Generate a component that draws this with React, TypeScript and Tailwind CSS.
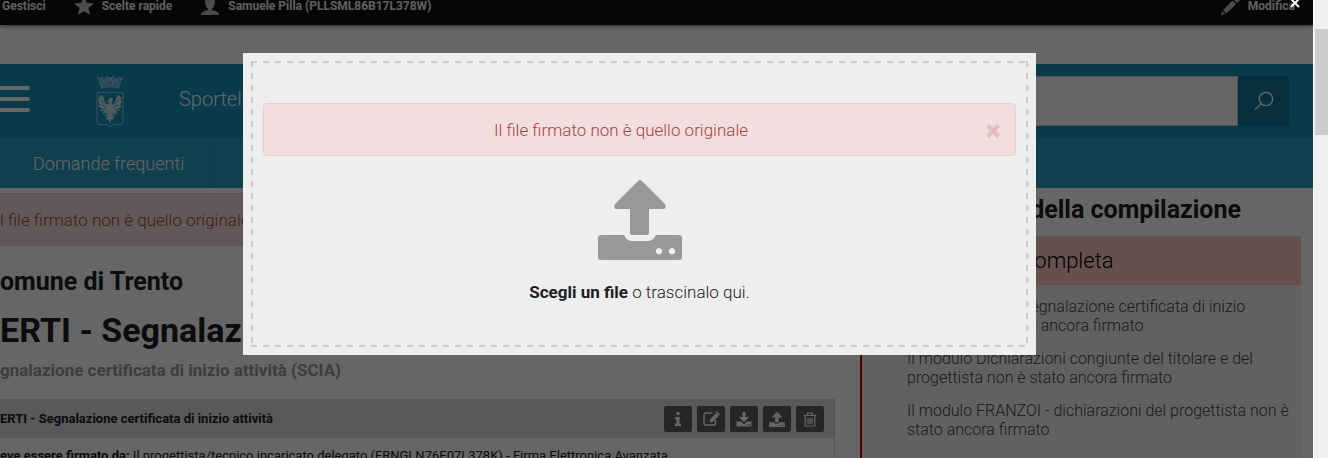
import type { ReactNode } from "react";

function UploadIcon({ className }: { className: string }) {
  return (
    <svg viewBox="0 0 84 80" className={className} fill="currentColor" aria-hidden="true">
      <path d="M40 1Q42 -1 44 1L67 24Q69 29 65 29H51V53Q51 55 49 55H34Q32 55 32 53V29H18Q15 29 17 24Z" />
      <path
        fillRule="evenodd"
        d="M3 55H26Q29 61 34 61H50Q55 61 58 55H81Q84 55 84 58V77Q84 80 81 80H3Q0 80 0 77V58Q0 55 3 55ZM61 68a3.2 3.2 0 1 0 .01 0ZM74 68a3.2 3.2 0 1 0 .01 0Z"
      />
    </svg>
  );
}

function DownloadIcon() {
  return (
    <svg viewBox="0 0 16 15" className="h-[15px] w-4" fill="currentColor" aria-hidden="true">
      <path d="M6.5 0h3v5H13L8 10.500 3 5h3.500Z" />
      <path fillRule="evenodd" d="M.5 9.500H5L8 12.300 11 9.500h4.500V14.500H.5ZM11 12v1h1v-1ZM13.200 12v1h1v-1Z" />
    </svg>
  );
}

function InfoIcon() {
  return (
    <svg viewBox="0 0 8 14" className="h-3.5 w-2" fill="currentColor" aria-hidden="true">
      <path d="M2.500 0h3v3h-3ZM1 5h4.600v6.500H7V14H1v-2.500h1.500V7.300H1Z" />
    </svg>
  );
}

function EditIcon() {
  return (
    <svg viewBox="0 0 18 16" className="h-4 w-[18px]" fill="none" stroke="currentColor" aria-hidden="true">
      <path d="M10.500 2H4Q2 2 2 4v8.500Q2 14 4 14h7.500q2 0 2-2V9" strokeWidth="1.400" />
      <path d="M8 11.200 8.700 8 14 2.300l2.600 2.400-5.400 5.700Z" fill="currentColor" strokeWidth=".5" />
      <path d="m14 .5 3.500 3.300" strokeWidth="1.200" />
    </svg>
  );
}

function TrashIcon() {
  return (
    <svg viewBox="0 0 14 15" className="h-[15px] w-3.5" fill="none" stroke="currentColor" aria-hidden="true">
      <path d="M.5 3.500h13M4.500 3V1.200h5V3M2.200 4v10h9.600V4M5 6v6M7 6v6M9 6v6" strokeWidth="1.200" />
    </svg>
  );
}

function Crest() {
  return (
    <svg viewBox="0 0 28 52" className="ml-[66px] h-[52px] w-7" fill="none" stroke="#fff" aria-label="Comune di Trento">
      <g opacity=".7">
        <path d="M1 2 3 5 5 12Q14 8 23 12L25 5 27 2 24 4 22 2 20 5 17 1 14 4 11 1 8 5 6 2 4 4Z" fill="#fff" fillOpacity=".5" strokeWidth=".7" />
        <path d="M5 13Q14 10 23 13M6 8 8 5 10 9 13 3 15 3 17 9 20 5 22 8" strokeWidth=".9" />
        <path d="M1 17.500H27V47Q27 49.500 24 49.500H17L14 51.500 11 49.500H4Q1 49.500 1 47Z" strokeWidth=".8" />
      </g>
      <path
        fill="#fff"
        stroke="none"
        opacity=".75"
        d="M14 23Q17 22 17 25L15.500 27 17 30 20 25 21 19 22 22 24 19 24 23 26 21 25 26 26 27 24 30 26 31 22 34 24 36 20 36 22 39 18 38 19 42 17 41 18 45 15.500 44 14 49 12.500 44 10 45 11 41 9 42 10 38 6 39 8 36 4 36 6 34 2 31 4 30 2 27 3 26 2 21 4 23 4 19 6 22 7 19 8 25 11 30 13 28 11 26Z"
      />
      <path d="M10 32 6 30M10 34 6 35M18 32 22 30M18 34 22 35M12 38 10 42M16 38 18 42M9 29 5 25M19 29 23 25" stroke="#1291b9" strokeWidth=".7" />
    </svg>
  );
}

function ToolButton({ label, children }: { label: string; children: ReactNode }) {
  return (
    <button aria-label={label} className="flex h-[26px] w-7 items-center justify-center rounded-xs bg-[#5f5f5f] text-white">
      {children}
    </button>
  );
}

function TopBar() {
  return (
    <div className="flex h-[25px] shrink-0 items-start bg-[#0f0f0f] text-xs leading-3 font-bold text-[#eee] shadow-[0_1px_4px_rgba(0,0,0,.6)]">
      <a href="#gestisci" className="ml-0.5">Gestisci</a>
      <a href="#scelte" className="ml-7 flex gap-2">
        <svg viewBox="0 0 20 20" className="-mt-1 size-5" fill="#bbb" aria-hidden="true">
          <path d="m10 0 2.800 6.800 7.200.6-5.500 4.700L16.200 19 10 15.300 3.800 19l1.700-6.900L0 7.400l7.200-.6Z" />
        </svg>
        Scelte rapide
      </a>
      <a href="#utente" className="ml-7 flex gap-2">
        <svg viewBox="0 0 20 20" className="-mt-1 size-5" fill="#bbb" aria-hidden="true">
          <path d="M5 5Q5 0 10 0t5 5-3 8v1q6 1 7 4v1H1v-1q1-3 7-4v-1Q5 10 5 5Z" />
        </svg>
        Samuele Pilla (PLLSML86B17L378W)
      </a>
      <a href="#modifica" className="mr-[18px] ml-auto flex gap-2">
        <svg viewBox="0 0 20 20" className="-mt-1 size-5" fill="#bbb" aria-hidden="true">
          <path d="M1 19 2 15 5 18ZM3 14 12.500 4.500 16 8 6.500 17.500ZM13.500 3.500 16.500.5 20 4 17 7Z" />
        </svg>
        Modifica
      </a>
    </div>
  );
}

function Header() {
  return (
    <header className="mt-[39px] shrink-0 text-white">
      <div className="flex h-[74px] items-center bg-[#1291b9]">
        <button aria-label="Menu" className="flex w-[30px] flex-col gap-[7px] pb-1">
          <span className="h-1 rounded-r-full bg-white" />
          <span className="h-1 rounded-r-full bg-white" />
          <span className="h-1 rounded-r-full bg-white" />
        </button>
        <Crest />
        <span className="ml-[55px] pb-1 text-xl font-light">Sportello</span>
        <form className="mr-6 ml-auto flex h-[50px] w-[460px]">
          <input aria-label="Cerca" className="min-w-0 flex-1 border border-[#ccc] bg-white" />
          <button type="button" aria-label="Avvia ricerca" className="flex w-[51px] items-center justify-center bg-[#0f7899]">
            <svg viewBox="0 0 20 20" className="size-5" fill="none" stroke="white" strokeWidth="1.300" aria-hidden="true">
              <circle cx="12" cy="8" r="6.700" />
              <path d="M7 13 1 18.500" />
            </svg>
          </button>
        </form>
      </div>
      <nav className="flex h-[50px] bg-[#289ec3]">
        <a href="#faq" className="flex w-[214px] items-center border-r border-[#1b8fb3] pt-0.5 pl-[33px] text-lg font-light">
          Domande frequenti
        </a>
      </nav>
    </header>
  );
}

function LeftColumn() {
  return (
    <main className="flex-1 pt-[5px] text-[#1c2024]">
      <p className="flex h-[53px] items-center border-y border-[#ebccd1] bg-[#f2dede] pt-0.5 text-[17px] font-light text-[#a94442]">
        l file firmato non è quello originale
      </p>
      <h2 className="mt-5 text-[25px] leading-8 font-bold">omune di Trento</h2>
      <h1 className="mt-3 text-[34px] leading-10 font-bold">ERTI - Segnalazione</h1>
      <p className="mt-2 text-[17px] leading-6 font-bold text-[#999]">gnalazione certificata di inizio attività (SCIA)</p>
      <section className="mt-[17px] mr-[25px] border border-l-0 border-[#d4d6da]">
        <div className="flex h-[38px] items-center bg-[#dcdfe4] pr-2.5">
          <h3 className="flex-1 text-[13px] font-bold">ERTI - Segnalazione certificata di inizio attività</h3>
          <div className="flex gap-[5px]">
            <ToolButton label="Informazioni"><InfoIcon /></ToolButton>
            <ToolButton label="Modifica modulo"><EditIcon /></ToolButton>
            <ToolButton label="Scarica"><DownloadIcon /></ToolButton>
            <ToolButton label="Carica"><UploadIcon className="h-[15px] w-4" /></ToolButton>
            <ToolButton label="Elimina"><TrashIcon /></ToolButton>
          </div>
        </div>
        <p className="h-12 pt-2 text-[13px] leading-5 whitespace-nowrap">
          <strong>eve essere firmato da:</strong> Il progettista/tecnico incaricato delegato (FRNGLN76E07L378K) - Firma Elettronica Avanzata
        </p>
      </section>
    </main>
  );
}

function RightColumn() {
  return (
    <aside className="w-[453px] pr-3">
      <h2 className="mr-[60px] pt-[6px] pb-[10px] text-right text-[25px] leading-8 font-bold text-[#1c2024]">Stato della compilazione</h2>
      <section className="h-80 border-l-2 border-[#be0000] bg-[#f3f3f3]">
        <p className="flex h-[49px] items-center bg-[#ffc9c4] pl-[143px] text-[22px] font-light text-black">Incompleta</p>
        <ul className="flex flex-col gap-3.5 pt-3 pl-[45px] text-base leading-[19px] font-light whitespace-nowrap text-[#444]">
          <li>Il modulo ERTI - Segnalazione certificata di inizio<br />attività non è stato ancora firmato</li>
          <li>Il modulo Dichiarazioni congiunte del titolare e del<br />progettista non è stato ancora firmato</li>
          <li>Il modulo FRANZOI - dichiarazioni del progettista non è<br />stato ancora firmato</li>
        </ul>
      </section>
    </aside>
  );
}

function UploadDialog() {
  return (
    <div className="absolute inset-0 bg-black/60 pt-[53px] pr-[277px] pl-[243px]">
      <button aria-label="Chiudi" className="absolute -top-1 right-3 text-white">
        <svg viewBox="0 0 12 14" className="h-3.5 w-3" stroke="currentColor" strokeWidth="2" aria-hidden="true">
          <path d="m2 3 8 8M10 3 2 11" />
        </svg>
      </button>
      <div role="dialog" aria-label="Carica file" className="bg-[#eee] p-2">
        <div className="h-[286px] px-3 pt-[42px] text-center text-[17px] font-light text-[#1c2024] [background:repeating-linear-gradient(90deg,#ccc_0_6px,transparent_6px_12px)_top/100%_2px_no-repeat,repeating-linear-gradient(90deg,#ccc_0_6px,transparent_6px_12px)_bottom/100%_2px_no-repeat,repeating-linear-gradient(180deg,#ccc_0_6px,transparent_6px_12px)_left/2px_100%_no-repeat,repeating-linear-gradient(180deg,#ccc_0_6px,transparent_6px_12px)_right/2px_100%_no-repeat]">
          <div className="flex h-[53px] items-center rounded-sm border border-[#ebccd1] bg-[#f2dede] pt-0.5 pr-[15px] text-[#a94442]">
            <span className="flex-1 pr-2">Il file firmato non è quello originale</span>
            <button aria-label="Chiudi avviso" className="text-[#e3bebf]">
              <svg viewBox="0 0 14 14" className="size-3.5" stroke="currentColor" strokeWidth="4" aria-hidden="true">
                <path d="m1.500 1.500 11 11M12.500 1.500l-11 11" />
              </svg>
            </button>
          </div>
          <UploadIcon className="mx-auto mt-6 h-20 w-[84px] text-[#999]" />
          <p className="mt-5"><button className="font-bold">Scegli un file</button> o trascinalo qui.</p>
        </div>
      </div>
    </div>
  );
}

export default function App() {
  return (
    <div className="flex h-screen overflow-hidden font-['Roboto',sans-serif]">
      <div className="relative flex min-w-0 flex-1 flex-col overflow-hidden bg-white">
        <TopBar />
        <Header />
        <div className="flex">
          <LeftColumn />
          <RightColumn />
        </div>
        <UploadDialog />
      </div>
      <div className="w-[15px] border-l border-white bg-[#f0f0f0] pt-[29px]">
        <div className="ml-px h-[106px] bg-[#cdcdcd]" />
      </div>
    </div>
  );
}
